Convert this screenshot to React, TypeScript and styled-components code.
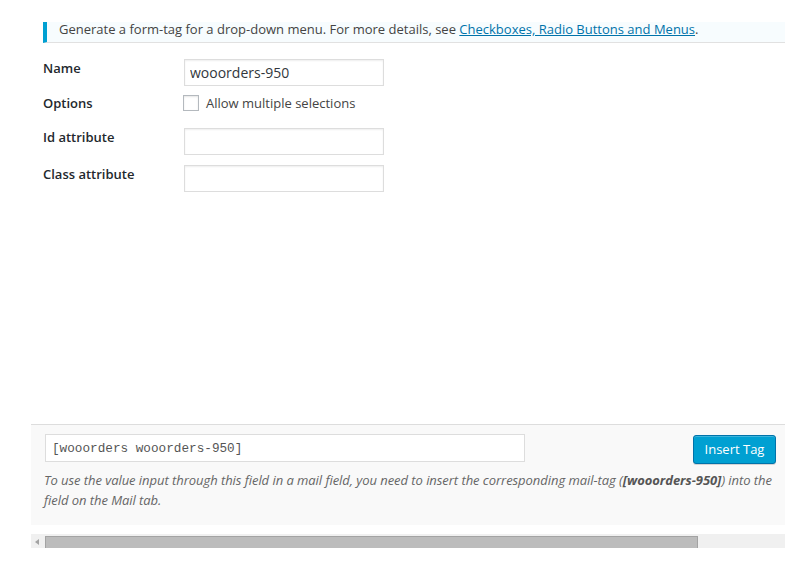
import React from 'react';
import styled, { createGlobalStyle } from 'styled-components';

const GlobalStyle = createGlobalStyle`
  html, body {
    margin: 0;
    padding: 0;
    background: #fff;
  }
  body {
    font-family: "Open Sans", "Liberation Sans", sans-serif;
    font-size: 13px;
    color: #32373c;
  }
  * {
    box-sizing: border-box;
  }
`;

const App: React.FC = () => {
  return (
    <>
      <GlobalStyle />
      <Page>
        <FormArea>
          <Notice>
            Generate a form-tag for a drop-down menu. For more details, see{' '}
            <NoticeLink href="#">Checkboxes, Radio Buttons and Menus</NoticeLink>.
          </Notice>

          <Fields>
            <FieldRow $gap={16}>
              <Label>Name</Label>
              <TextInput defaultValue="wooorders-950" />
            </FieldRow>

            <FieldRow $gap={8} $center>
              <Label>Options</Label>
              <CheckLabel>
                <CheckBox />
                Allow multiple selections
              </CheckLabel>
            </FieldRow>

            <FieldRow $gap={16}>
              <Label>Id attribute</Label>
              <TextInput />
            </FieldRow>

            <FieldRow $gap={10}>
              <Label>Class attribute</Label>
              <TextInput />
            </FieldRow>
          </Fields>
        </FormArea>

        <InsertBox>
          <InsertRow>
            <CodeInput readOnly value="[wooorders wooorders-950]" />
            <InsertButton>Insert Tag</InsertButton>
          </InsertRow>
          <HelpText>
            To use the value input through this field in a mail field, you need to insert the
            corresponding mail-tag (<strong>[wooorders-950]</strong>) into the field on the Mail tab.
          </HelpText>
        </InsertBox>

        <ScrollBar>
          <ScrollArrow />
          <ScrollThumb />
        </ScrollBar>
      </Page>
    </>
  );
};

const Page = styled.div`
  width: 754px;
  margin-left: 31px;
  padding-top: 22px;
`;

const FormArea = styled.div`
  height: 402px;
  padding-left: 12px;
`;

const Notice = styled.div`
  height: 21px;
  padding-left: 12px;
  border-left: 4px solid #00a0d2;
  border-bottom: 1px solid #e1e1e1;
  background: #f7fcfe;
  line-height: 14px;
  color: #444;
  white-space: nowrap;
`;

const NoticeLink = styled.a`
  color: #0073aa;
  text-decoration: underline;
`;

const Fields = styled.div`
  display: flex;
  flex-direction: column;
`;

const FieldRow = styled.div<{ $gap: number; $center?: boolean }>`
  display: grid;
  grid-template-columns: 141px 200px;
  align-items: ${({ $center }) => ($center ? 'center' : 'start')};
  margin-top: ${({ $gap }) => $gap}px;
`;

const Label = styled.div`
  font-weight: 600;
  line-height: 18px;
  color: #23282d;
`;

const TextInput = styled.input`
  width: 200px;
  height: 27px;
  padding: 0 5px;
  border: 1px solid #ddd;
  box-shadow: inset 0 1px 2px rgba(0, 0, 0, 0.07);
  background: #fff;
  font-family: "Open Sans", "Liberation Sans", sans-serif;
  font-size: 14px;
  color: #32373c;
  outline: none;
`;

const CheckLabel = styled.label`
  display: flex;
  align-items: center;
  gap: 7px;
  margin-left: -1px;
  color: #444;
  line-height: 18px;
`;

const CheckBox = styled.span`
  width: 16px;
  height: 16px;
  border: 1px solid #b4b9be;
  background: #fff;
  box-shadow: inset 0 1px 2px rgba(0, 0, 0, 0.1);
`;

const InsertBox = styled.div`
  height: 101px;
  border-top: 1px solid #dddddd;
  background: #f9f9f9;
  padding: 9px 9px 0 14px;
`;

const InsertRow = styled.div`
  display: flex;
  justify-content: space-between;
  align-items: flex-start;
`;

const CodeInput = styled.input`
  width: 480px;
  height: 28px;
  padding: 0 6px;
  border: 1px solid #ddd;
  background: #fff;
  font-family: Consolas, "Liberation Mono", "DejaVu Sans Mono", monospace;
  font-size: 12.7px;
  color: #555;
  outline: none;
`;

const InsertButton = styled.button`
  width: 83px;
  height: 29px;
  margin-top: 1px;
  padding: 0 0 1px;
  border: 1px solid #0073aa;
  border-radius: 3px;
  background: #00a0d2;
  box-shadow: inset 0 1px 0 rgba(120, 200, 230, 0.5), 0 1px 0 rgba(0, 0, 0, 0.15);
  color: #fff;
  font-family: "Open Sans", "Liberation Sans", sans-serif;
  font-size: 13px;
  cursor: pointer;
`;

const HelpText = styled.p`
  margin: 6px 0 0 -1px;
  width: 736px;
  font-style: italic;
  line-height: 20px;
  letter-spacing: -0.05px;
  color: #666;

  strong {
    font-weight: 700;
    color: #555;
  }
`;

const ScrollBar = styled.div`
  display: flex;
  align-items: flex-end;
  height: 14px;
  margin-top: 9px;
  background: #f0f0f0;
`;

const ScrollArrow = styled.span`
  width: 0;
  height: 0;
  margin: 0 6px 3px 4px;
  border-top: 3px solid transparent;
  border-bottom: 3px solid transparent;
  border-right: 4px solid #a3a3a3;
`;

const ScrollThumb = styled.div`
  width: 653px;
  height: 12px;
  background: #bcbcbc;
  border: 1px solid #a3a3a3;
  border-bottom: none;
`;

export default App;
